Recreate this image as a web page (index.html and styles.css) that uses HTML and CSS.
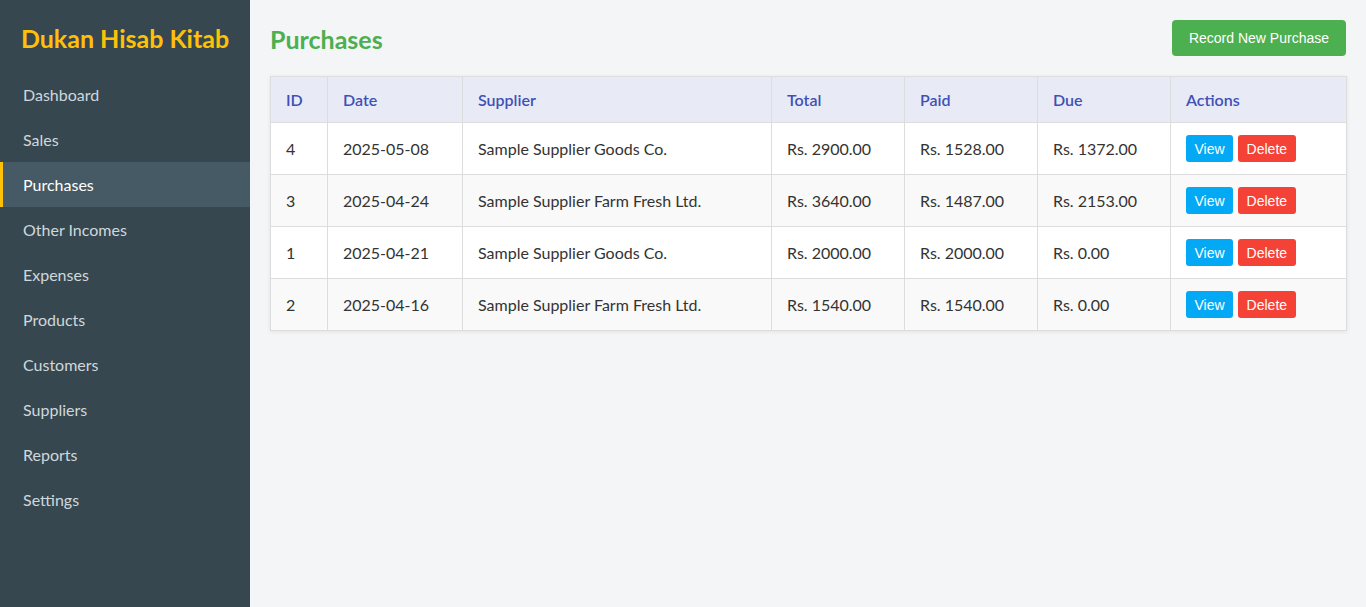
FILE: index.html
```html
<!DOCTYPE html>
<html lang="en">
<head>
<meta charset="utf-8">
<title>Purchases - Dukan Hisab Kitab</title>
<link rel="stylesheet" href="styles.css">
</head>
<body>
<div class="app">
  <aside class="sidebar">
    <h1 class="brand">Dukan Hisab Kitab</h1>
    <nav class="nav">
      <a class="nav-item" href="#">Dashboard</a>
      <a class="nav-item" href="#">Sales</a>
      <a class="nav-item active" href="#">Purchases</a>
      <a class="nav-item" href="#">Other Incomes</a>
      <a class="nav-item" href="#">Expenses</a>
      <a class="nav-item" href="#">Products</a>
      <a class="nav-item" href="#">Customers</a>
      <a class="nav-item" href="#">Suppliers</a>
      <a class="nav-item" href="#">Reports</a>
      <a class="nav-item" href="#">Settings</a>
    </nav>
  </aside>
  <main class="main">
    <div class="page-head">
      <h2 class="page-title">Purchases</h2>
      <button class="btn btn-primary">Record New Purchase</button>
    </div>
    <table class="data-table">
      <colgroup>
        <col class="c-id"><col class="c-date"><col class="c-sup"><col class="c-amt"><col class="c-amt"><col class="c-amt"><col class="c-act">
      </colgroup>
      <thead>
        <tr><th>ID</th><th>Date</th><th>Supplier</th><th>Total</th><th>Paid</th><th>Due</th><th>Actions</th></tr>
      </thead>
      <tbody>
        <tr><td>4</td><td>2025-05-08</td><td>Sample Supplier Goods Co.</td><td>Rs. 2900.00</td><td>Rs. 1528.00</td><td>Rs. 1372.00</td><td class="actions"><button class="btn-sm view">View</button><button class="btn-sm del">Delete</button></td></tr>
        <tr><td>3</td><td>2025-04-24</td><td>Sample Supplier Farm Fresh Ltd.</td><td>Rs. 3640.00</td><td>Rs. 1487.00</td><td>Rs. 2153.00</td><td class="actions"><button class="btn-sm view">View</button><button class="btn-sm del">Delete</button></td></tr>
        <tr><td>1</td><td>2025-04-21</td><td>Sample Supplier Goods Co.</td><td>Rs. 2000.00</td><td>Rs. 2000.00</td><td>Rs. 0.00</td><td class="actions"><button class="btn-sm view">View</button><button class="btn-sm del">Delete</button></td></tr>
        <tr><td>2</td><td>2025-04-16</td><td>Sample Supplier Farm Fresh Ltd.</td><td>Rs. 1540.00</td><td>Rs. 1540.00</td><td>Rs. 0.00</td><td class="actions"><button class="btn-sm view">View</button><button class="btn-sm del">Delete</button></td></tr>
      </tbody>
    </table>
  </main>
</div>
</body>
</html>
```

FILE: styles.css
```css
* { box-sizing: border-box; }
html, body { margin: 0; padding: 0; height: 100%; }
body {
  font-family: Lato, "Open Sans", sans-serif;
  font-size: 16px;
  color: #333;
  background: #f4f5f7;
}
.app { display: flex; min-height: 100vh; }
.sidebar {
  width: 250px;
  flex: 0 0 250px;
  background: #37474f;
  color: #cfd8dc;
}
.brand {
  margin: 0;
  padding: 23px 0 19px;
  text-align: center;
  color: #ffc107;
  font-size: 25px;
  line-height: 30px;
  font-weight: 700;
}
.nav { display: flex; flex-direction: column; }
.nav-item {
  display: block;
  height: 45px;
  line-height: 45px;
  padding-left: 20px;
  border-left: 3px solid transparent;
  color: #cfd8dc;
  text-decoration: none;
}
.nav-item.active {
  background: #455a64;
  border-left-color: #ffc107;
  color: #fff;
}
.main {
  flex: 1;
  padding: 20px;
  min-width: 0;
}
.page-head {
  display: flex;
  align-items: center;
  justify-content: space-between;
  height: 36px;
  margin-bottom: 20px;
}
.page-title {
  margin: 0;
  color: #4caf50;
  font-size: 25px;
  line-height: 30px;
  font-weight: 700;
  padding-top: 2px;
}
.btn {
  font-family: "Liberation Sans", Arial, sans-serif;
  font-size: 14px;
  border: 0;
  border-radius: 4px;
  height: 36px;
  padding: 0 17px;
  color: #fff;
  cursor: pointer;
}
.btn-primary { background: #4caf50; }
.data-table {
  width: 100%;
  table-layout: fixed;
  border-collapse: collapse;
  background: #fff;
  box-shadow: 0 1px 4px rgba(0,0,0,0.08);
}
.c-id { width: 57px; }
.c-date { width: 135px; }
.c-sup { width: 309px; }
.c-amt { width: 133px; }
.c-act { width: 176px; }
.data-table th, .data-table td {
  border: 1px solid #ddd;
  padding: 0 15px;
  text-align: left;
  line-height: 21px;
  white-space: nowrap;
}
.data-table th {
  height: 46px;
  background: #e8eaf6;
  color: #3f51b5;
  font-weight: 600;
}
.data-table td { height: 52px; }
.data-table tbody tr:nth-child(even) td { background: #f9f9f9; }
.actions { font-size: 0; }
.btn-sm {
  font-family: "Liberation Sans", Arial, sans-serif;
  font-size: 14px;
  height: 27px;
  padding: 0 8.5px;
  border: 0;
  border-radius: 3px;
  color: #fff;
  margin-right: 5px;
  vertical-align: middle;
  cursor: pointer;
}
.btn-sm.view { background: #03a9f4; }
.btn-sm.del { background: #f44336; }
```
